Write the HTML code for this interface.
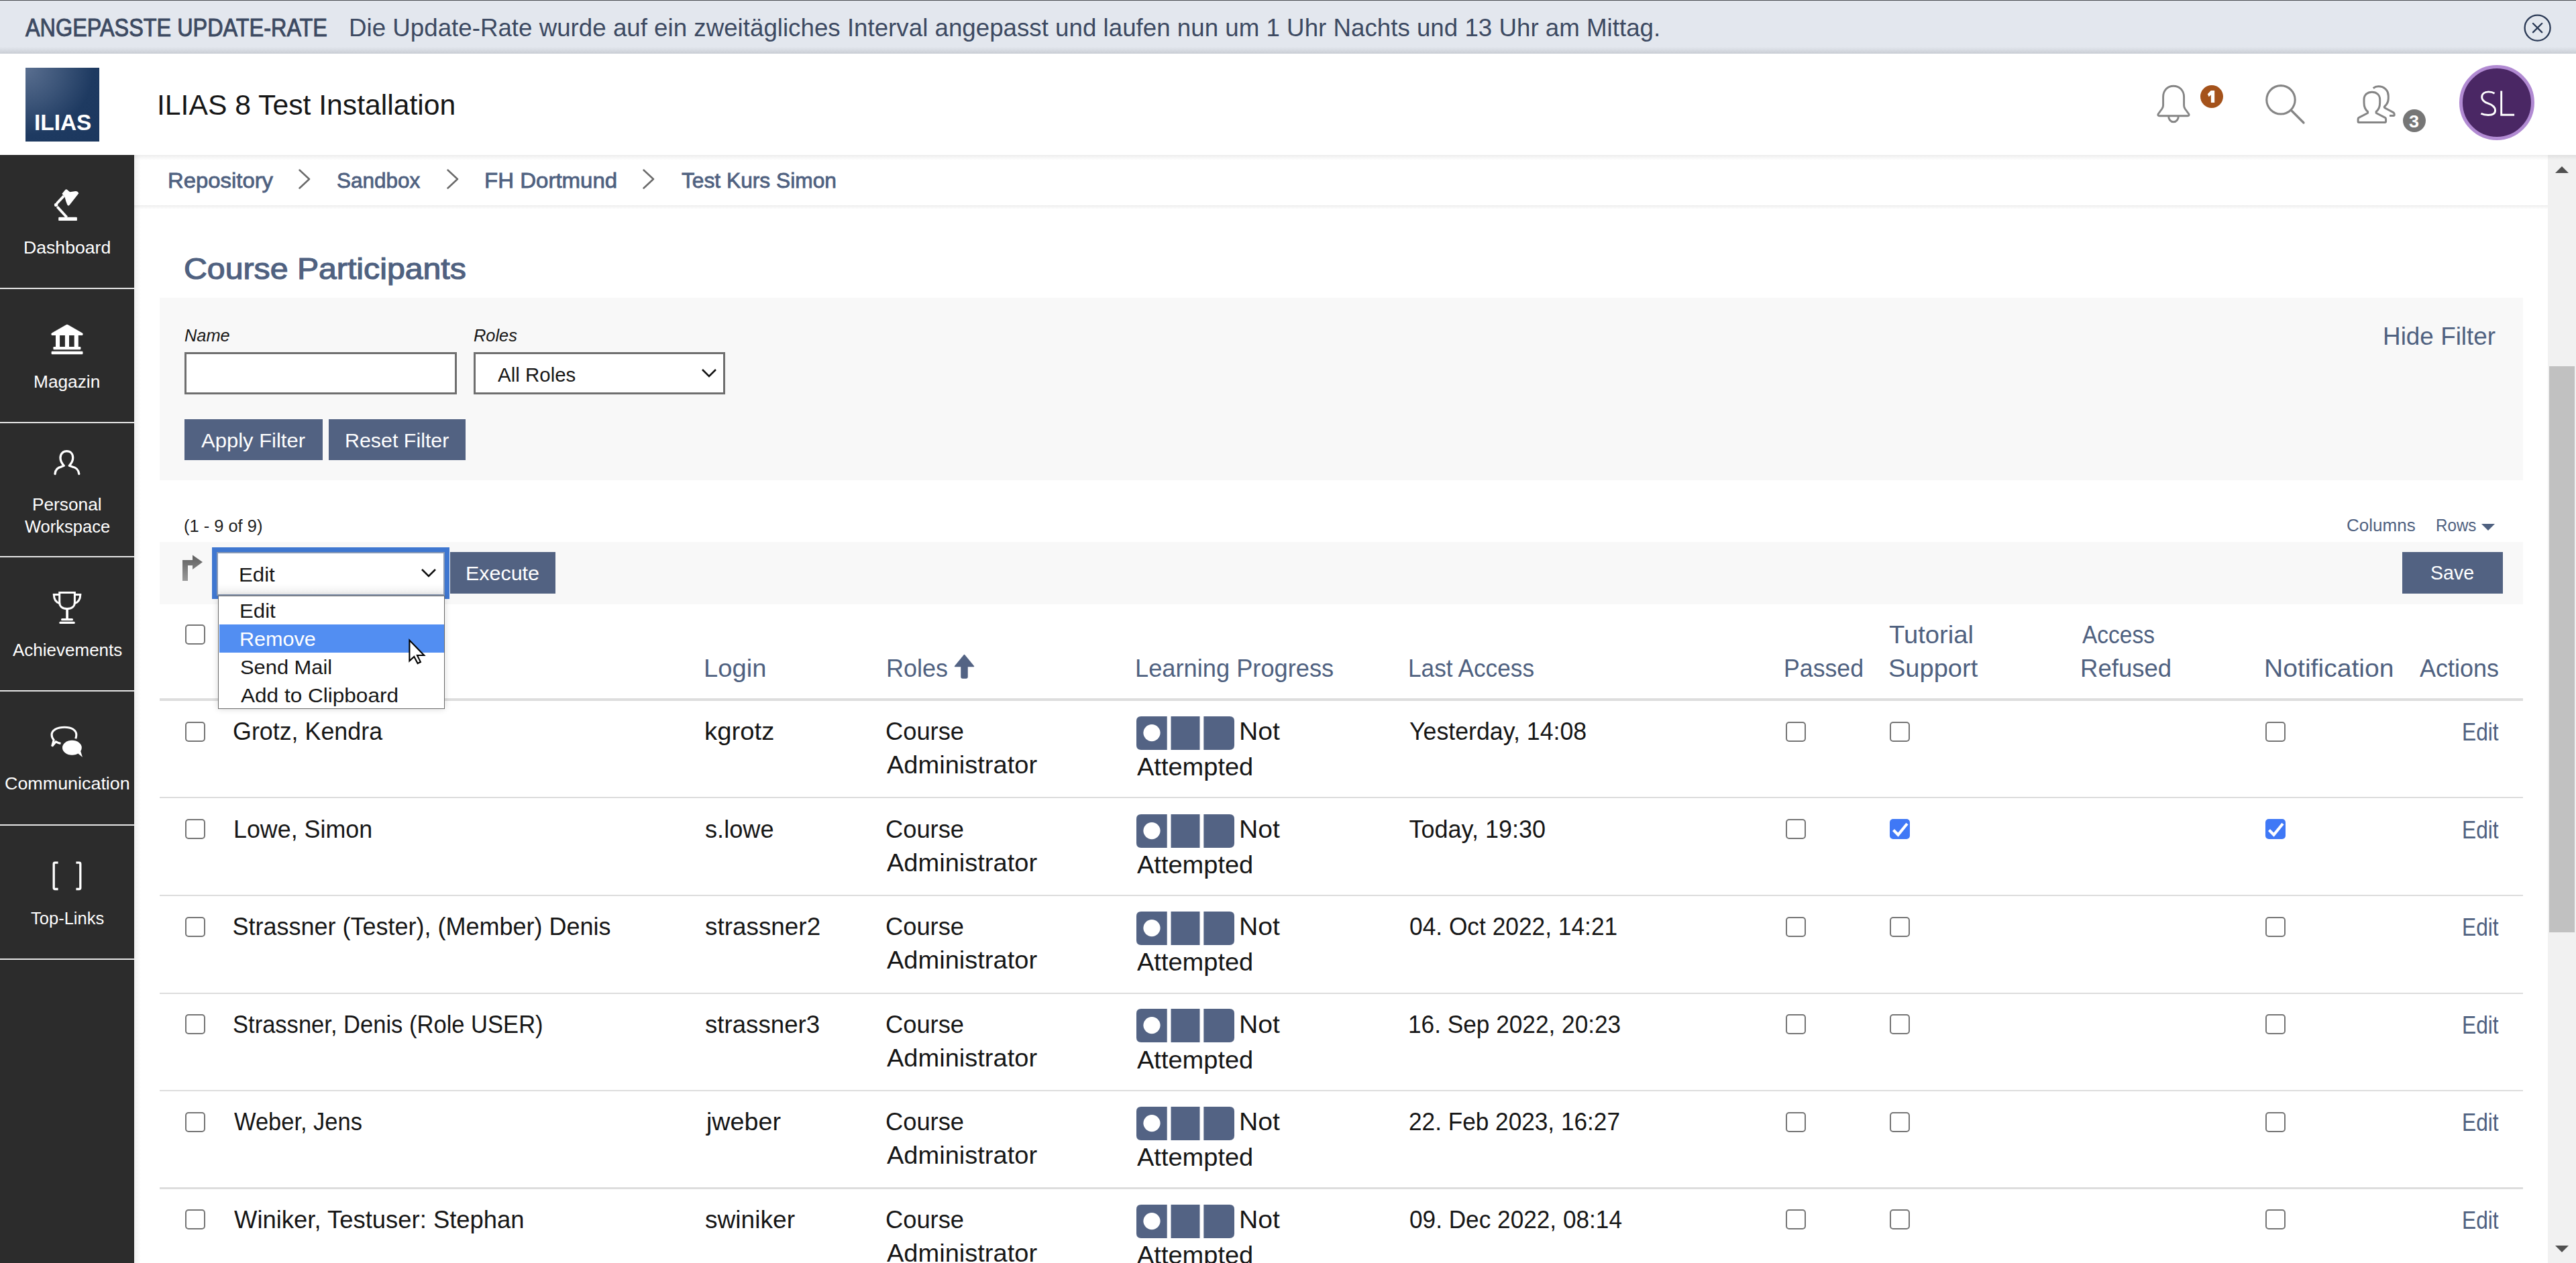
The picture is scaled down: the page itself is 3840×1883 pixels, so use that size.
<!DOCTYPE html><html><head><meta charset="utf-8"><title>ILIAS</title><style>html,body{margin:0;padding:0;}body{width:3840px;height:1883px;overflow:hidden;position:relative;background:#fff;font-family:"Liberation Sans", sans-serif;}body>div,body>svg{position:absolute;}.t{white-space:nowrap;}</style></head><body><div style="left:0px;top:0px;width:3840px;height:80px;background:#e3e7ee;"></div>
<div style="left:0px;top:0px;width:3840px;height:1px;background:#4a4c50;"></div>
<div style="left:0px;top:70px;width:3840px;height:10px;background:linear-gradient(#e3e7ee,#c9cdd4);"></div>
<div class="t" id="t0" style="left:38.00px;top:23.50px;font-size:36px;line-height:36px;color:#3d4a62;-webkit-text-stroke:1px #3d4a62;transform:scaleX(0.8998);transform-origin:0 0;">ANGEPASSTE UPDATE-RATE</div>
<div class="t" id="t1" style="left:519.94px;top:23.50px;font-size:36px;line-height:36px;color:#3d4a62;transform:scaleX(1.0199);transform-origin:0 0;">Die Update-Rate wurde auf ein zweit&auml;gliches Interval angepasst und laufen nun um 1 Uhr Nachts und 13 Uhr am Mittag.</div>
<svg style="left:3761px;top:21px" width="44" height="42" viewBox="0 0 44 42"><circle cx="21.6" cy="20.6" r="19" fill="none" stroke="#2b3a56" stroke-width="2.3"/><path d="M15 14 L28.2 27.2 M28.2 14 L15 27.2" stroke="#2b3a56" stroke-width="2.4" stroke-linecap="round"/></svg>
<div style="left:0px;top:80px;width:3840px;height:151px;background:#fff;"></div>
<div style="left:38px;top:101px;width:110px;height:110px;background:radial-gradient(circle at 0% 0%, #5a6f90 0%, #3b5478 35%, #1e3a61 65%, #1b375e 100%);"></div>
<div class="t" id="t2" style="left:50.98px;top:166.00px;font-size:33px;line-height:33px;color:#ffffff;font-weight:700;transform:scaleX(1.0123);transform-origin:0 0;">ILIAS</div>
<div class="t" id="t3" style="left:233.94px;top:136.10px;font-size:42px;line-height:42px;color:#161616;transform:scaleX(1.0162);transform-origin:0 0;">ILIAS 8 Test Installation</div>
<svg style="left:3200px;top:110px" width="80" height="90" viewBox="0 0 80 90"><path d="M39.9 18.2 C31 18.2 24.6 25 24.6 34.5 L24.6 47 C24.6 49 24 50.5 23 52 L17.5 59.5 C16.2 61.4 17 62.7 19 62.7 L61 62.7 C63 62.7 63.8 61.4 62.5 59.5 L57 52 C56 50.5 55.6 49 55.6 47 L55.6 34.5 C55.6 25 49 18.2 39.9 18.2 Z" fill="none" stroke="#858585" stroke-width="2.9" stroke-linejoin="round"/><path d="M32.6 63 C32.6 68 35.8 71.8 40 71.8 C44.2 71.8 47.4 68 47.4 63" fill="none" stroke="#858585" stroke-width="2.9"/></svg>
<div style="left:3280px;top:126.5px;width:34px;height:34px;border-radius:50%;background:#a4521b;"></div>
<svg style="left:3280px;top:126px" width="34" height="34" viewBox="0 0 34 34"><path d="M15.8 8.9 L21.2 8.9 L21.2 27.1 L15.9 27.1 L15.9 15.6 L12.6 18.2 L10.8 14.2 Z" fill="#fff"/></svg>
<svg style="left:3370px;top:120px" width="72" height="70" viewBox="0 0 72 70"><circle cx="30" cy="28.8" r="21.2" fill="none" stroke="#858585" stroke-width="3.1"/><path d="M45.5 44.5 L64 63" stroke="#858585" stroke-width="3.3" stroke-linecap="round"/></svg>
<svg style="left:3508px;top:120px" width="70" height="70" viewBox="0 0 70 70"><path d="M27.9 17.2 C21 17.2 16 21.5 16 28.5 L16 33 C16 39.5 17.8 43.5 21.6 46.5 L21.6 48.5 L8.3 55.3 C7.4 55.8 7.1 56.5 7.1 57.5 L7.1 61.2 C7.1 62 7.5 62.4 8.3 62.4 L47.4 62.4 C48.2 62.4 48.6 62 48.6 61.2 L48.6 57.5 C48.6 56.5 48.3 55.8 47.4 55.3 L34.1 48.5 L34.1 46.5 C37.9 43.5 39.7 39.5 39.7 33 L39.7 28.5 C39.7 21.5 34.8 17.2 27.9 17.2 Z" fill="none" stroke="#858585" stroke-width="3" stroke-linejoin="round"/><path d="M29.7 11.5 C32 9.7 34.6 8.8 37.5 8.8 C45.5 8.8 52.3 14 52.3 23 L52.3 27 C52.3 32 50.3 35.5 46.8 38.5 C45.8 39.5 46.2 40.5 47.3 41 L59.6 47.6 C60.8 48.3 61.2 49 61.2 50.3 L61.2 51.2 C61.2 52 60.8 52.4 60 52.4 L54 52.4" fill="none" stroke="#858585" stroke-width="3" stroke-linejoin="round"/></svg>
<div style="left:3582px;top:163px;width:34px;height:34px;border-radius:50%;background:#767676;"></div>
<div class="t" id="t4" style="left:3591.42px;top:168.50px;font-size:25px;line-height:25px;color:#ffffff;font-weight:700;transform:scaleX(1.0833);transform-origin:0 0;">3</div>
<div style="left:3666px;top:96.5px;width:102px;height:102px;border-radius:50%;background:#4a2764;border:5px solid #b18ad2;"></div>
<svg style="left:3690px;top:130px" width="70" height="50" viewBox="0 0 70 50"><path d="M28.6 9.2 C26 7.6 23 6.9 19.6 6.9 C13.2 6.9 9.7 10.3 9.7 14.9 C9.7 19.5 12.6 21.9 19 24.2 C26.5 26.9 29.6 29.9 29.6 34.5 C29.6 39.1 25.6 41.5 19.1 41.5 C14.6 41.5 11 40.6 8.4 39.2" fill="none" stroke="#fff" stroke-width="2.9"/><path d="M38.7 5.5 L38.7 41.2 L58.1 41.2" fill="none" stroke="#fff" stroke-width="2.9"/></svg>
<div style="left:0px;top:231px;width:200px;height:1652px;background:#2c2c2c;"></div>
<div style="left:0px;top:429px;width:200px;height:2px;background:#e6e6e6;"></div>
<div style="left:0px;top:629px;width:200px;height:2px;background:#e6e6e6;"></div>
<div style="left:0px;top:829px;width:200px;height:2px;background:#e6e6e6;"></div>
<div style="left:0px;top:1029px;width:200px;height:2px;background:#e6e6e6;"></div>
<div style="left:0px;top:1229px;width:200px;height:2px;background:#e6e6e6;"></div>
<div style="left:0px;top:1429px;width:200px;height:2px;background:#e6e6e6;"></div>
<div style="left:200px;top:231px;width:10px;height:1652px;background:linear-gradient(90deg,rgba(0,0,0,0.06),rgba(0,0,0,0));"></div>
<svg style="left:60px;top:270px" width="80" height="70" viewBox="0 0 80 70"><path d="M32.5 18.8 L37.3 13 Q38.5 11.8 40 12.8 L44.2 16.3 L52.5 15 Q55.8 14.8 57.3 18.3 L43.8 35.6 Q41.8 37.8 40.3 35.3 Q38 30 36.6 24 L34.5 21.8 Z" fill="#fff"/><path d="M24.5 33.5 L35 22.3" stroke="#fff" stroke-width="3.9" fill="none"/><circle cx="23.6" cy="35.4" r="2.7" fill="#fff"/><path d="M25.3 38.2 L39.6 54" stroke="#fff" stroke-width="3.9" fill="none"/><rect x="27.2" y="53.8" width="27.7" height="5.3" rx="1.2" fill="#fff"/></svg>
<div class="t" id="t5" style="left:34.95px;top:356.00px;font-size:26px;line-height:26px;color:#ffffff;transform:scaleX(1.0242);transform-origin:0 0;">Dashboard</div>
<svg style="left:60px;top:470px" width="80" height="70" viewBox="0 0 80 70"><path d="M38.5 14.2 Q40 13.3 41.5 14.2 L62.8 26.6 Q64.6 28 62.8 29.9 L17.2 29.9 Q15.4 28 17.2 26.6 Z" fill="#fff"/><rect x="23" y="29" width="6.1" height="18.5" fill="#fff"/><rect x="36.9" y="29" width="6.1" height="18.5" fill="#fff"/><rect x="50.7" y="29" width="6.1" height="18.5" fill="#fff"/><rect x="19.4" y="47.1" width="41" height="4.2" rx="1.2" fill="#fff"/><rect x="16.6" y="53.8" width="46.9" height="4.4" rx="1.2" fill="#fff"/></svg>
<div class="t" id="t6" style="left:49.98px;top:556.00px;font-size:26px;line-height:26px;color:#ffffff;transform:scaleX(1.0105);transform-origin:0 0;">Magazin</div>
<svg style="left:60px;top:655px" width="80" height="70" viewBox="0 0 80 70"><path d="M22 51.5 C22.5 45 25.5 42 31.5 40.8 L35.3 39.3 C32.3 36 30 33 30 27.5 C30 21.5 34 17.6 39.5 17.6 C45 17.6 48.7 21.5 48.7 27.5 C48.7 33 46.3 36 43.3 39.3 L47.5 40.8 C54 42 56.8 45 57.8 51.5" fill="none" stroke="#fff" stroke-width="3.3" stroke-linecap="round" stroke-linejoin="round"/></svg>
<div class="t" id="t7" style="left:47.98px;top:739.00px;font-size:26px;line-height:26px;color:#ffffff;transform:scaleX(1.0101);transform-origin:0 0;">Personal</div>
<div class="t" id="t8" style="left:37.00px;top:772.00px;font-size:26px;line-height:26px;color:#ffffff;transform:scaleX(0.9814);transform-origin:0 0;">Workspace</div>
<svg style="left:60px;top:870px" width="80" height="70" viewBox="0 0 80 70"><path d="M28.7 13.4 L51.4 13.4 L51.4 28 C51.4 34.5 46.5 37.6 40 37.6 C33.5 37.6 28.7 34.5 28.7 28 Z" fill="none" stroke="#fff" stroke-width="3"/><path d="M28.7 16.6 L20.3 16.6 C20.5 23 23.5 28 28.7 29.5 M51.4 16.6 L59.8 16.6 C59.6 23 56.6 28 51.4 29.5" fill="none" stroke="#fff" stroke-width="3"/><path d="M40.1 38 L40.1 53" stroke="#fff" stroke-width="3.7"/><rect x="31" y="52.1" width="18" height="3.1" rx="1.5" fill="#fff"/><rect x="28.3" y="56.8" width="23.5" height="3.3" rx="1.6" fill="#fff"/></svg>
<div class="t" id="t9" style="left:19.00px;top:955.50px;font-size:26px;line-height:26px;color:#ffffff;">Achievements</div>
<svg style="left:60px;top:1070px" width="80" height="70" viewBox="0 0 80 70"><path d="M30.5 38.6 C27.5 37.9 25.3 36.9 23.4 35.8 L17.6 42.6 L20.2 33.2 C18.1 31 17.1 28.3 17.1 25.6 C17.1 18.2 25.6 14.3 36.2 14.3 C46.8 14.3 53.8 18.5 53.8 25.6 C53.8 27.6 53.4 29.5 52.7 31.3" fill="none" stroke="#fff" stroke-width="3.1" stroke-linejoin="miter"/><ellipse cx="47.4" cy="44.7" rx="14.4" ry="11" fill="#fff"/><path d="M54.5 52 L62.9 58.8 L59.6 48 Z" fill="#fff"/></svg>
<div class="t" id="t10" style="left:6.97px;top:1155.00px;font-size:26px;line-height:26px;color:#ffffff;transform:scaleX(1.0337);transform-origin:0 0;">Communication</div>
<svg style="left:60px;top:1270px" width="80" height="70" viewBox="0 0 80 70"><path d="M26.6 16.2 L22 16.2 Q20.2 16.2 20.2 18 L20.2 53.7 Q20.2 55.5 22 55.5 L26.6 55.5 M53.4 16.2 L58 16.2 Q59.8 16.2 59.8 18 L59.8 53.7 Q59.8 55.5 58 55.5 L53.4 55.5" fill="none" stroke="#fff" stroke-width="3.3"/></svg>
<div class="t" id="t11" style="left:46.00px;top:1355.50px;font-size:26px;line-height:26px;color:#ffffff;transform:scaleX(0.9818);transform-origin:0 0;">Top-Links</div>
<div style="left:200px;top:306px;width:3598px;height:6px;background:linear-gradient(rgba(0,0,0,0.07),rgba(0,0,0,0));"></div>
<div class="t" id="t12" style="left:249.95px;top:253.00px;font-size:32px;line-height:32px;color:#4f6180;-webkit-text-stroke:0.8px #4f6180;transform:scaleX(1.0265);transform-origin:0 0;">Repository</div>
<div class="t" id="t13" style="left:502.02px;top:253.00px;font-size:32px;line-height:32px;color:#4f6180;-webkit-text-stroke:0.8px #4f6180;transform:scaleX(0.9840);transform-origin:0 0;">Sandbox</div>
<div class="t" id="t14" style="left:721.94px;top:253.00px;font-size:32px;line-height:32px;color:#4f6180;-webkit-text-stroke:0.8px #4f6180;transform:scaleX(1.0319);transform-origin:0 0;">FH Dortmund</div>
<div class="t" id="t15" style="left:1016.00px;top:253.00px;font-size:32px;line-height:32px;color:#4f6180;-webkit-text-stroke:0.8px #4f6180;transform:scaleX(0.9913);transform-origin:0 0;">Test Kurs Simon</div>
<svg style="left:443px;top:250px" width="22" height="34" viewBox="0 0 22 34"><path d="M3.5 3.5 L18 17 L3.5 30.5" fill="none" stroke="#6a6a6a" stroke-width="2.5" stroke-linecap="round" stroke-linejoin="round"/></svg>
<svg style="left:664px;top:250px" width="22" height="34" viewBox="0 0 22 34"><path d="M3.5 3.5 L18 17 L3.5 30.5" fill="none" stroke="#6a6a6a" stroke-width="2.5" stroke-linecap="round" stroke-linejoin="round"/></svg>
<svg style="left:956px;top:250px" width="22" height="34" viewBox="0 0 22 34"><path d="M3.5 3.5 L18 17 L3.5 30.5" fill="none" stroke="#6a6a6a" stroke-width="2.5" stroke-linecap="round" stroke-linejoin="round"/></svg>
<div style="left:3798px;top:231px;width:42px;height:1652px;background:#f1f1f1;"></div>
<div style="left:3800px;top:546px;width:38px;height:844px;background:#c1c1c1;"></div>
<svg style="left:3808px;top:247px" width="22" height="12" viewBox="0 0 22 12"><path d="M1 11 L11 1 L21 11 Z" fill="#505050"/></svg>
<svg style="left:3808px;top:1856px" width="22" height="12" viewBox="0 0 22 12"><path d="M1 1 L11 11 L21 1 Z" fill="#505050"/></svg>
<div style="left:200px;top:231px;width:3640px;height:8px;background:linear-gradient(rgba(0,0,0,0.07),rgba(0,0,0,0));"></div>
<div class="t" id="t16" style="left:273.86px;top:378.00px;font-size:45px;line-height:45px;color:#4f6180;-webkit-text-stroke:1.2px #4f6180;transform:scaleX(1.0718);transform-origin:0 0;">Course Participants</div>
<div style="left:238px;top:444px;width:3523px;height:272px;background:#f8f8f8;"></div>
<div class="t" id="t17" style="left:274.98px;top:487.50px;font-size:25px;line-height:25px;color:#161616;font-style:italic;transform:scaleX(1.0154);transform-origin:0 0;">Name</div>
<div class="t" id="t18" style="left:705.98px;top:487.50px;font-size:25px;line-height:25px;color:#161616;font-style:italic;transform:scaleX(1.0159);transform-origin:0 0;">Roles</div>
<div style="left:275px;top:525px;width:406px;height:63px;background:#fff;border:3px solid #6f6f6f;box-sizing:border-box;"></div>
<div style="left:706px;top:525px;width:375px;height:63px;background:#fff;border:3px solid #6f6f6f;box-sizing:border-box;"></div>
<div class="t" id="t19" style="left:741.50px;top:543.50px;font-size:30px;line-height:30px;color:#161616;transform:scaleX(0.9829);transform-origin:0 0;">All Roles</div>
<svg style="left:1045px;top:548px" width="24" height="16" viewBox="0 0 24 16"><path d="M2 3 L12 13 L22 3" fill="none" stroke="#111" stroke-width="2.6"/></svg>
<div class="t" id="t20" style="left:3551.93px;top:483.50px;font-size:36px;line-height:36px;color:#4f6180;transform:scaleX(1.0248);transform-origin:0 0;">Hide Filter</div>
<div style="left:275px;top:625px;width:206px;height:61px;background:#526282;"></div>
<div class="t" id="t21" style="left:300.00px;top:641.90px;font-size:30px;line-height:30px;color:#fff;transform:scaleX(1.0333);transform-origin:0 0;">Apply Filter</div>
<div style="left:490px;top:625px;width:204px;height:61px;background:#526282;"></div>
<div class="t" id="t22" style="left:513.97px;top:641.90px;font-size:30px;line-height:30px;color:#fff;transform:scaleX(1.0132);transform-origin:0 0;">Reset Filter</div>
<div class="t" id="t23" style="left:273.98px;top:771.50px;font-size:25px;line-height:25px;color:#222;transform:scaleX(1.0177);transform-origin:0 0;">(1 - 9 of 9)</div>
<div class="t" id="t24" style="left:3498.46px;top:770.50px;font-size:25px;line-height:25px;color:#4f6180;transform:scaleX(1.0412);transform-origin:0 0;">Columns</div>
<div class="t" id="t25" style="left:3630.57px;top:770.50px;font-size:25px;line-height:25px;color:#4f6180;transform:scaleX(0.9667);transform-origin:0 0;">Rows</div>
<svg style="left:3698px;top:780px" width="22" height="12" viewBox="0 0 22 12"><path d="M1 1 L21 1 L11 11 Z" fill="#4f6180"/></svg>
<div style="left:238px;top:808px;width:3523px;height:93px;background:#f8f8f8;"></div>
<svg style="left:270px;top:826px" width="34" height="42" viewBox="0 0 34 42"><defs><linearGradient id="ag" x1="0" y1="0" x2="0" y2="1"><stop offset="0" stop-color="#5f5f5f"/><stop offset="1" stop-color="#9a9a9a"/></linearGradient></defs><path d="M2 40 L10 40 L10 17 L17 17 L17 23 L32 12 L17 1.5 L17 9 L2 9 Z" fill="url(#ag)"/></svg>
<div style="left:316px;top:816px;width:354px;height:77px;background:#3f77d0;"></div>
<div style="left:323px;top:823px;width:340px;height:65px;background:#fff;border:2px solid #8a9ab5;box-sizing:border-box;"></div>
<div style="left:325px;top:870px;width:336px;height:16px;background:linear-gradient(rgba(0,0,0,0),rgba(0,0,0,0.06));"></div>
<div class="t" id="t26" style="left:355.92px;top:841.50px;font-size:30px;line-height:30px;color:#161616;transform:scaleX(1.0400);transform-origin:0 0;">Edit</div>
<svg style="left:627px;top:846px" width="24" height="16" viewBox="0 0 24 16"><path d="M2 3 L12 13 L22 3" fill="none" stroke="#111" stroke-width="2.6"/></svg>
<div style="left:671px;top:823px;width:157px;height:62px;background:#526282;"></div>
<div class="t" id="t27" style="left:694.47px;top:840.00px;font-size:30px;line-height:30px;color:#fff;transform:scaleX(1.0143);transform-origin:0 0;">Execute</div>
<div style="left:3581px;top:823px;width:150px;height:62px;background:#526282;"></div>
<div class="t" id="t28" style="left:3622.75px;top:839.10px;font-size:30px;line-height:30px;color:#fff;transform:scaleX(0.9545);transform-origin:0 0;">Save</div>
<div style="left:276px;top:931px;width:30px;height:30px;border:2.8px solid #757575;border-radius:5px;box-sizing:border-box;background:#fff;"></div>
<div class="t" id="t29" style="left:1048.82px;top:978.50px;font-size:36px;line-height:36px;color:#4f6180;transform:scaleX(1.0602);transform-origin:0 0;">Login</div>
<div class="t" id="t30" style="left:1321.00px;top:978.50px;font-size:36px;line-height:36px;color:#4f6180;">Roles</div>
<svg style="left:1422px;top:975px" width="31" height="37" viewBox="0 0 31 37"><path d="M15.5 1.5 L29.5 18.5 L20 18.5 L20 34 C20 35 19 36 18 36 L13 36 C12 36 11 35 11 34 L11 18.5 L1.5 18.5 Z" fill="#536384" stroke="#536384" stroke-width="1.5" stroke-linejoin="round"/></svg>
<div class="t" id="t31" style="left:1691.98px;top:978.50px;font-size:36px;line-height:36px;color:#4f6180;transform:scaleX(1.0069);transform-origin:0 0;">Learning Progress</div>
<div class="t" id="t32" style="left:2099.06px;top:978.50px;font-size:36px;line-height:36px;color:#4f6180;transform:scaleX(0.9787);transform-origin:0 0;">Last Access</div>
<div class="t" id="t33" style="left:2659.03px;top:978.50px;font-size:36px;line-height:36px;color:#4f6180;transform:scaleX(0.9913);transform-origin:0 0;">Passed</div>
<div class="t" id="t34" style="left:2815.94px;top:928.50px;font-size:36px;line-height:36px;color:#4f6180;transform:scaleX(1.0603);transform-origin:0 0;">Tutorial</div>
<div class="t" id="t35" style="left:2814.89px;top:978.50px;font-size:36px;line-height:36px;color:#4f6180;transform:scaleX(1.0565);transform-origin:0 0;">Support</div>
<div class="t" id="t36" style="left:3104.00px;top:928.50px;font-size:36px;line-height:36px;color:#4f6180;transform:scaleX(0.9304);transform-origin:0 0;">Access</div>
<div class="t" id="t37" style="left:3100.95px;top:978.50px;font-size:36px;line-height:36px;color:#4f6180;transform:scaleX(1.0155);transform-origin:0 0;">Refused</div>
<div class="t" id="t38" style="left:3374.74px;top:978.50px;font-size:36px;line-height:36px;color:#4f6180;transform:scaleX(1.0867);transform-origin:0 0;">Notification</div>
<div class="t" id="t39" style="left:3607.00px;top:978.50px;font-size:36px;line-height:36px;color:#4f6180;">Actions</div>
<div style="left:238px;top:1041px;width:3523px;height:4px;background:#dddddd;"></div>
<div style="left:276px;top:1076px;width:30px;height:30px;border:2.8px solid #757575;border-radius:5px;box-sizing:border-box;background:#fff;"></div>
<div class="t" id="t40" style="left:346.51px;top:1073.00px;font-size:36px;line-height:36px;color:#161616;transform:scaleX(0.9955);transform-origin:0 0;">Grotz, Kendra</div>
<div class="t" id="t41" style="left:1049.87px;top:1073.00px;font-size:36px;line-height:36px;color:#161616;transform:scaleX(1.0638);transform-origin:0 0;">kgrotz</div>
<div class="t" id="t42" style="left:1320.48px;top:1073.00px;font-size:36px;line-height:36px;color:#161616;transform:scaleX(1.0088);transform-origin:0 0;">Course</div>
<div class="t" id="t43" style="left:1321.50px;top:1123.00px;font-size:36px;line-height:36px;color:#161616;transform:scaleX(1.0566);transform-origin:0 0;">Administrator</div>
<svg style="left:1694px;top:1068px" width="146" height="50" viewBox="0 0 146 50"><path d="M7 0 L45.7 0 L45.7 50 L7 50 Q0 50 0 43 L0 7 Q0 0 7 0 Z" fill="#536384"/><rect x="51.5" y="0" width="43" height="50" fill="#536384"/><path d="M100.3 0 L139 0 Q146 0 146 7 L146 43 Q146 50 139 50 L100.3 50 Z" fill="#536384"/><circle cx="23" cy="24.6" r="12.6" fill="#fff"/></svg>
<div class="t" id="t44" style="left:1847.24px;top:1073.00px;font-size:36px;line-height:36px;color:#161616;transform:scaleX(1.0868);transform-origin:0 0;">Not</div>
<div class="t" id="t45" style="left:1694.50px;top:1126.00px;font-size:36px;line-height:36px;color:#161616;transform:scaleX(1.0556);transform-origin:0 0;">Attempted</div>
<div class="t" id="t46" style="left:2100.51px;top:1073.00px;font-size:36px;line-height:36px;color:#161616;transform:scaleX(0.9924);transform-origin:0 0;">Yesterday, 14:08</div>
<div style="left:2662px;top:1076px;width:30px;height:30px;border:2.8px solid #757575;border-radius:5px;box-sizing:border-box;background:#fff;"></div>
<div style="left:2817px;top:1076px;width:30px;height:30px;border:2.8px solid #757575;border-radius:5px;box-sizing:border-box;background:#fff;"></div>
<div style="left:3377px;top:1076px;width:30px;height:30px;border:2.8px solid #757575;border-radius:5px;box-sizing:border-box;background:#fff;"></div>
<div class="t" id="t47" style="left:3670.36px;top:1074.00px;font-size:36px;line-height:36px;color:#4f6180;transform:scaleX(0.8814);transform-origin:0 0;">Edit</div>
<div style="left:238px;top:1188px;width:3523px;height:2px;background:#dddddd;"></div>
<div style="left:276px;top:1221px;width:30px;height:30px;border:2.8px solid #757575;border-radius:5px;box-sizing:border-box;background:#fff;"></div>
<div class="t" id="t48" style="left:348.01px;top:1218.50px;font-size:36px;line-height:36px;color:#161616;transform:scaleX(0.9951);transform-origin:0 0;">Lowe, Simon</div>
<div class="t" id="t49" style="left:1050.99px;top:1218.50px;font-size:36px;line-height:36px;color:#161616;transform:scaleX(1.0060);transform-origin:0 0;">s.lowe</div>
<div class="t" id="t50" style="left:1320.48px;top:1218.50px;font-size:36px;line-height:36px;color:#161616;transform:scaleX(1.0088);transform-origin:0 0;">Course</div>
<div class="t" id="t51" style="left:1321.50px;top:1268.50px;font-size:36px;line-height:36px;color:#161616;transform:scaleX(1.0566);transform-origin:0 0;">Administrator</div>
<svg style="left:1694px;top:1214px" width="146" height="50" viewBox="0 0 146 50"><path d="M7 0 L45.7 0 L45.7 50 L7 50 Q0 50 0 43 L0 7 Q0 0 7 0 Z" fill="#536384"/><rect x="51.5" y="0" width="43" height="50" fill="#536384"/><path d="M100.3 0 L139 0 Q146 0 146 7 L146 43 Q146 50 139 50 L100.3 50 Z" fill="#536384"/><circle cx="23" cy="24.6" r="12.6" fill="#fff"/></svg>
<div class="t" id="t52" style="left:1847.24px;top:1218.50px;font-size:36px;line-height:36px;color:#161616;transform:scaleX(1.0868);transform-origin:0 0;">Not</div>
<div class="t" id="t53" style="left:1694.50px;top:1271.50px;font-size:36px;line-height:36px;color:#161616;transform:scaleX(1.0556);transform-origin:0 0;">Attempted</div>
<div class="t" id="t54" style="left:2100.50px;top:1218.50px;font-size:36px;line-height:36px;color:#161616;">Today, 19:30</div>
<div style="left:2662px;top:1221px;width:30px;height:30px;border:2.8px solid #757575;border-radius:5px;box-sizing:border-box;background:#fff;"></div>
<svg style="left:2817px;top:1221px" width="30" height="30" viewBox="0 0 30 30"><rect x="0" y="0" width="30" height="30" rx="5" fill="#3f78f6"/><path d="M5.5 16.5 L12.5 23.5 L26 7" fill="none" stroke="#fff" stroke-width="4.2"/></svg>
<svg style="left:3377px;top:1221px" width="30" height="30" viewBox="0 0 30 30"><rect x="0" y="0" width="30" height="30" rx="5" fill="#3f78f6"/><path d="M5.5 16.5 L12.5 23.5 L26 7" fill="none" stroke="#fff" stroke-width="4.2"/></svg>
<div class="t" id="t55" style="left:3670.36px;top:1219.50px;font-size:36px;line-height:36px;color:#4f6180;transform:scaleX(0.8814);transform-origin:0 0;">Edit</div>
<div style="left:238px;top:1334px;width:3523px;height:2px;background:#dddddd;"></div>
<div style="left:276px;top:1367px;width:30px;height:30px;border:2.8px solid #757575;border-radius:5px;box-sizing:border-box;background:#fff;"></div>
<div class="t" id="t56" style="left:346.50px;top:1364.00px;font-size:36px;line-height:36px;color:#161616;">Strassner (Tester), (Member) Denis</div>
<div class="t" id="t57" style="left:1050.98px;top:1364.00px;font-size:36px;line-height:36px;color:#161616;transform:scaleX(1.0242);transform-origin:0 0;">strassner2</div>
<div class="t" id="t58" style="left:1320.48px;top:1364.00px;font-size:36px;line-height:36px;color:#161616;transform:scaleX(1.0088);transform-origin:0 0;">Course</div>
<div class="t" id="t59" style="left:1321.50px;top:1414.00px;font-size:36px;line-height:36px;color:#161616;transform:scaleX(1.0566);transform-origin:0 0;">Administrator</div>
<svg style="left:1694px;top:1359px" width="146" height="50" viewBox="0 0 146 50"><path d="M7 0 L45.7 0 L45.7 50 L7 50 Q0 50 0 43 L0 7 Q0 0 7 0 Z" fill="#536384"/><rect x="51.5" y="0" width="43" height="50" fill="#536384"/><path d="M100.3 0 L139 0 Q146 0 146 7 L146 43 Q146 50 139 50 L100.3 50 Z" fill="#536384"/><circle cx="23" cy="24.6" r="12.6" fill="#fff"/></svg>
<div class="t" id="t60" style="left:1847.24px;top:1364.00px;font-size:36px;line-height:36px;color:#161616;transform:scaleX(1.0868);transform-origin:0 0;">Not</div>
<div class="t" id="t61" style="left:1694.50px;top:1417.00px;font-size:36px;line-height:36px;color:#161616;transform:scaleX(1.0556);transform-origin:0 0;">Attempted</div>
<div class="t" id="t62" style="left:2100.52px;top:1364.00px;font-size:36px;line-height:36px;color:#161616;transform:scaleX(0.9809);transform-origin:0 0;">04. Oct 2022, 14:21</div>
<div style="left:2662px;top:1367px;width:30px;height:30px;border:2.8px solid #757575;border-radius:5px;box-sizing:border-box;background:#fff;"></div>
<div style="left:2817px;top:1367px;width:30px;height:30px;border:2.8px solid #757575;border-radius:5px;box-sizing:border-box;background:#fff;"></div>
<div style="left:3377px;top:1367px;width:30px;height:30px;border:2.8px solid #757575;border-radius:5px;box-sizing:border-box;background:#fff;"></div>
<div class="t" id="t63" style="left:3670.36px;top:1365.00px;font-size:36px;line-height:36px;color:#4f6180;transform:scaleX(0.8814);transform-origin:0 0;">Edit</div>
<div style="left:238px;top:1480px;width:3523px;height:2px;background:#dddddd;"></div>
<div style="left:276px;top:1512px;width:30px;height:30px;border:2.8px solid #757575;border-radius:5px;box-sizing:border-box;background:#fff;"></div>
<div class="t" id="t64" style="left:346.58px;top:1509.50px;font-size:36px;line-height:36px;color:#161616;transform:scaleX(0.9594);transform-origin:0 0;">Strassner, Denis (Role USER)</div>
<div class="t" id="t65" style="left:1050.98px;top:1509.50px;font-size:36px;line-height:36px;color:#161616;transform:scaleX(1.0181);transform-origin:0 0;">strassner3</div>
<div class="t" id="t66" style="left:1320.48px;top:1509.50px;font-size:36px;line-height:36px;color:#161616;transform:scaleX(1.0088);transform-origin:0 0;">Course</div>
<div class="t" id="t67" style="left:1321.50px;top:1559.50px;font-size:36px;line-height:36px;color:#161616;transform:scaleX(1.0566);transform-origin:0 0;">Administrator</div>
<svg style="left:1694px;top:1504px" width="146" height="50" viewBox="0 0 146 50"><path d="M7 0 L45.7 0 L45.7 50 L7 50 Q0 50 0 43 L0 7 Q0 0 7 0 Z" fill="#536384"/><rect x="51.5" y="0" width="43" height="50" fill="#536384"/><path d="M100.3 0 L139 0 Q146 0 146 7 L146 43 Q146 50 139 50 L100.3 50 Z" fill="#536384"/><circle cx="23" cy="24.6" r="12.6" fill="#fff"/></svg>
<div class="t" id="t68" style="left:1847.24px;top:1509.50px;font-size:36px;line-height:36px;color:#161616;transform:scaleX(1.0868);transform-origin:0 0;">Not</div>
<div class="t" id="t69" style="left:1694.50px;top:1562.50px;font-size:36px;line-height:36px;color:#161616;transform:scaleX(1.0556);transform-origin:0 0;">Attempted</div>
<div class="t" id="t70" style="left:2098.57px;top:1509.50px;font-size:36px;line-height:36px;color:#161616;transform:scaleX(0.9781);transform-origin:0 0;">16. Sep 2022, 20:23</div>
<div style="left:2662px;top:1512px;width:30px;height:30px;border:2.8px solid #757575;border-radius:5px;box-sizing:border-box;background:#fff;"></div>
<div style="left:2817px;top:1512px;width:30px;height:30px;border:2.8px solid #757575;border-radius:5px;box-sizing:border-box;background:#fff;"></div>
<div style="left:3377px;top:1512px;width:30px;height:30px;border:2.8px solid #757575;border-radius:5px;box-sizing:border-box;background:#fff;"></div>
<div class="t" id="t71" style="left:3670.36px;top:1510.50px;font-size:36px;line-height:36px;color:#4f6180;transform:scaleX(0.8814);transform-origin:0 0;">Edit</div>
<div style="left:238px;top:1625px;width:3523px;height:2px;background:#dddddd;"></div>
<div style="left:276px;top:1658px;width:30px;height:30px;border:2.8px solid #757575;border-radius:5px;box-sizing:border-box;background:#fff;"></div>
<div class="t" id="t72" style="left:348.50px;top:1655.00px;font-size:36px;line-height:36px;color:#161616;transform:scaleX(0.9571);transform-origin:0 0;">Weber, Jens</div>
<div class="t" id="t73" style="left:1053.05px;top:1655.00px;font-size:36px;line-height:36px;color:#161616;transform:scaleX(1.0467);transform-origin:0 0;">jweber</div>
<div class="t" id="t74" style="left:1320.48px;top:1655.00px;font-size:36px;line-height:36px;color:#161616;transform:scaleX(1.0088);transform-origin:0 0;">Course</div>
<div class="t" id="t75" style="left:1321.50px;top:1705.00px;font-size:36px;line-height:36px;color:#161616;transform:scaleX(1.0566);transform-origin:0 0;">Administrator</div>
<svg style="left:1694px;top:1650px" width="146" height="50" viewBox="0 0 146 50"><path d="M7 0 L45.7 0 L45.7 50 L7 50 Q0 50 0 43 L0 7 Q0 0 7 0 Z" fill="#536384"/><rect x="51.5" y="0" width="43" height="50" fill="#536384"/><path d="M100.3 0 L139 0 Q146 0 146 7 L146 43 Q146 50 139 50 L100.3 50 Z" fill="#536384"/><circle cx="23" cy="24.6" r="12.6" fill="#fff"/></svg>
<div class="t" id="t76" style="left:1847.24px;top:1655.00px;font-size:36px;line-height:36px;color:#161616;transform:scaleX(1.0868);transform-origin:0 0;">Not</div>
<div class="t" id="t77" style="left:1694.50px;top:1708.00px;font-size:36px;line-height:36px;color:#161616;transform:scaleX(1.0556);transform-origin:0 0;">Attempted</div>
<div class="t" id="t78" style="left:2099.55px;top:1655.00px;font-size:36px;line-height:36px;color:#161616;transform:scaleX(0.9774);transform-origin:0 0;">22. Feb 2023, 16:27</div>
<div style="left:2662px;top:1658px;width:30px;height:30px;border:2.8px solid #757575;border-radius:5px;box-sizing:border-box;background:#fff;"></div>
<div style="left:2817px;top:1658px;width:30px;height:30px;border:2.8px solid #757575;border-radius:5px;box-sizing:border-box;background:#fff;"></div>
<div style="left:3377px;top:1658px;width:30px;height:30px;border:2.8px solid #757575;border-radius:5px;box-sizing:border-box;background:#fff;"></div>
<div class="t" id="t79" style="left:3670.36px;top:1656.00px;font-size:36px;line-height:36px;color:#4f6180;transform:scaleX(0.8814);transform-origin:0 0;">Edit</div>
<div style="left:238px;top:1770px;width:3523px;height:2px;background:#dddddd;"></div>
<div style="left:276px;top:1803px;width:30px;height:30px;border:2.8px solid #757575;border-radius:5px;box-sizing:border-box;background:#fff;"></div>
<div class="t" id="t80" style="left:348.50px;top:1800.50px;font-size:36px;line-height:36px;color:#161616;transform:scaleX(1.0118);transform-origin:0 0;">Winiker, Testuser: Stephan</div>
<div class="t" id="t81" style="left:1050.97px;top:1800.50px;font-size:36px;line-height:36px;color:#161616;transform:scaleX(1.0310);transform-origin:0 0;">swiniker</div>
<div class="t" id="t82" style="left:1320.48px;top:1800.50px;font-size:36px;line-height:36px;color:#161616;transform:scaleX(1.0088);transform-origin:0 0;">Course</div>
<div class="t" id="t83" style="left:1321.50px;top:1850.50px;font-size:36px;line-height:36px;color:#161616;transform:scaleX(1.0566);transform-origin:0 0;">Administrator</div>
<svg style="left:1694px;top:1796px" width="146" height="50" viewBox="0 0 146 50"><path d="M7 0 L45.7 0 L45.7 50 L7 50 Q0 50 0 43 L0 7 Q0 0 7 0 Z" fill="#536384"/><rect x="51.5" y="0" width="43" height="50" fill="#536384"/><path d="M100.3 0 L139 0 Q146 0 146 7 L146 43 Q146 50 139 50 L100.3 50 Z" fill="#536384"/><circle cx="23" cy="24.6" r="12.6" fill="#fff"/></svg>
<div class="t" id="t84" style="left:1847.24px;top:1800.50px;font-size:36px;line-height:36px;color:#161616;transform:scaleX(1.0868);transform-origin:0 0;">Not</div>
<div class="t" id="t85" style="left:1694.50px;top:1853.50px;font-size:36px;line-height:36px;color:#161616;transform:scaleX(1.0556);transform-origin:0 0;">Attempted</div>
<div class="t" id="t86" style="left:2100.52px;top:1800.50px;font-size:36px;line-height:36px;color:#161616;transform:scaleX(0.9776);transform-origin:0 0;">09. Dec 2022, 08:14</div>
<div style="left:2662px;top:1803px;width:30px;height:30px;border:2.8px solid #757575;border-radius:5px;box-sizing:border-box;background:#fff;"></div>
<div style="left:2817px;top:1803px;width:30px;height:30px;border:2.8px solid #757575;border-radius:5px;box-sizing:border-box;background:#fff;"></div>
<div style="left:3377px;top:1803px;width:30px;height:30px;border:2.8px solid #757575;border-radius:5px;box-sizing:border-box;background:#fff;"></div>
<div class="t" id="t87" style="left:3670.36px;top:1801.50px;font-size:36px;line-height:36px;color:#4f6180;transform:scaleX(0.8814);transform-origin:0 0;">Edit</div>
<div style="left:238px;top:1771px;width:3523px;height:2px;background:#dddddd;"></div>
<div style="left:325px;top:888px;width:338px;height:169px;background:#fff;border:1.5px solid #6a6a6a;box-sizing:border-box;box-shadow:0 0 9px rgba(0,0,0,0.16);"></div>
<div style="left:326.5px;top:931px;width:335px;height:42px;background:#528ef2;"></div>
<div class="t" id="t88" style="left:356.92px;top:895.50px;font-size:30px;line-height:30px;color:#161616;transform:scaleX(1.0400);transform-origin:0 0;">Edit</div>
<div class="t" id="t89" style="left:356.96px;top:937.50px;font-size:30px;line-height:30px;color:#ffffff;transform:scaleX(1.0183);transform-origin:0 0;">Remove</div>
<div class="t" id="t90" style="left:357.97px;top:979.50px;font-size:30px;line-height:30px;color:#161616;transform:scaleX(1.0282);transform-origin:0 0;">Send Mail</div>
<div class="t" id="t91" style="left:359.00px;top:1021.50px;font-size:30px;line-height:30px;color:#161616;transform:scaleX(1.0514);transform-origin:0 0;">Add to Clipboard</div>
<svg style="left:606px;top:950px" width="32" height="42" viewBox="0 0 32 42"><path d="M4.4 4.6 L4.4 35.3 L11.3 28.9 L16.6 39 L20.9 36.9 L15.9 27 L26.2 27 Z" fill="#fff" stroke="#000" stroke-width="2.1" stroke-linejoin="miter"/></svg></body></html>
